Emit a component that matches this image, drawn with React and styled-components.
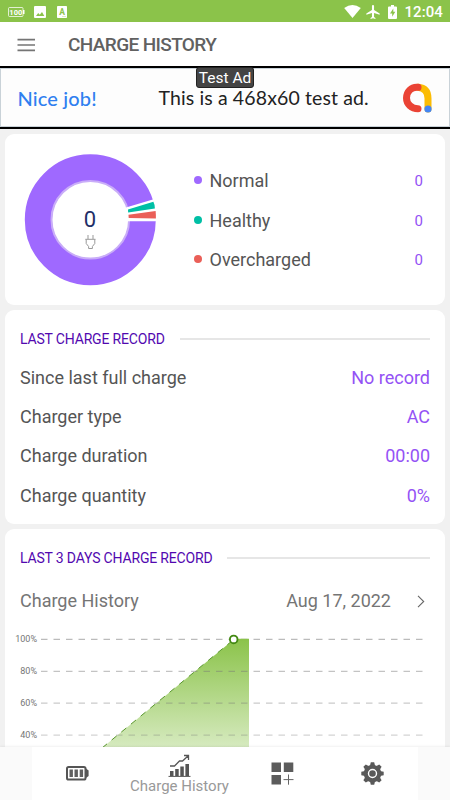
import React from 'react';
import styled, { createGlobalStyle } from 'styled-components';

const GlobalStyle = createGlobalStyle`
  * {
    box-sizing: border-box;
  }
  body {
    margin: 0;
    background: #f1f1f1;
    font-family: Roboto, "Liberation Sans", sans-serif;
  }
  svg {
    display: block;
    flex-shrink: 0;
  }
`;

const Screen = styled.div`
  width: 450px;
  height: 800px;
  display: flex;
  flex-direction: column;
  overflow: hidden;
  background: #f1f1f1;
`;

const StatusBar = styled.div`
  height: 22px;
  flex-shrink: 0;
  display: flex;
  align-items: center;
  justify-content: space-between;
  padding: 1px 7px 0 8px;
  background: #8bc34a;
  color: #fff;
`;

const StatusGroup = styled.div`
  display: flex;
  align-items: center;
  gap: ${props => props.gap}px;
`;

const Clock = styled.span`
  font-size: 15px;
  font-weight: 500;
  line-height: 20px;
  letter-spacing: 0.1px;
`;

const AppBar = styled.div`
  height: 44px;
  flex-shrink: 0;
  display: flex;
  align-items: center;
  gap: 33px;
  padding: 1px 0 0 17px;
  background: #fff;
`;

const Title = styled.h1`
  margin: 0;
  font-size: 19px;
  font-weight: 500;
  line-height: 22px;
  letter-spacing: -0.62px;
  color: #616161;
`;

const AdBanner = styled.div`
  position: relative;
  height: 63px;
  flex-shrink: 0;
  display: flex;
  align-items: center;
  padding: 0 18px 0 16px;
  background: #fdfdfd;
  border-top: 2px solid #000;
  border-bottom: 2px solid #000;
  box-shadow: inset 0 0 0 1px #c9d2d8;
  font-family: Lato, "Open Sans", sans-serif;
`;

const AdPraise = styled.span`
  width: 142.5px;
  padding-left: 1.5px;
  font-size: 20px;
  font-weight: 500;
  line-height: 24px;
  letter-spacing: 0.15px;
  color: #2f7ff0;
`;

const AdText = styled.span`
  flex: 1;
  font-size: 19.5px;
  line-height: 24px;
  letter-spacing: 0.12px;
  white-space: nowrap;
  color: #222;
`;

const AdTag = styled.span`
  position: absolute;
  top: -1px;
  left: 196px;
  width: 58px;
  height: 21px;
  border: 1px solid #222;
  border-radius: 3px;
  background: #444;
  color: #fff;
  font: 15.5px/20px Roboto, sans-serif;
  text-align: center;
`;

const Content = styled.main`
  flex: 1;
  min-height: 0;
  display: flex;
  flex-direction: column;
  gap: 5px;
  padding: 5px 5px 0;
  overflow: hidden;
`;

const Card = styled.section`
  height: ${props => props.height}px;
  flex-shrink: 0;
  border-radius: 9px;
  background: #fff;
`;

const SummaryCard = styled(Card)`
  display: flex;
  align-items: flex-start;
  padding: 19px 22px 0 19px;
`;

const Legend = styled.div`
  flex: 1;
  margin: 8.6px 0 0 37px;
`;

const LegendRow = styled.div`
  height: 39.4px;
  display: flex;
  align-items: center;
`;

const Dot = styled.i`
  width: 8px;
  height: 8px;
  margin: 0 7.5px 2px 0;
  border-radius: 50%;
  background: ${props => props.color};
`;

const Label = styled.span`
  flex: 1;
  font-size: 18px;
  line-height: 22px;
  color: ${props => (props.muted ? '#757575' : '#555')};
`;

const Value = styled.span`
  font-size: ${props => (props.small ? 15 : 18)}px;
  line-height: 22px;
  color: ${props => (props.muted ? '#757575' : '#9452f5')};
`;

const RecordCard = styled(Card)`
  padding: 20px 15px 0;
`;

const Heading = styled.div`
  display: flex;
  align-items: center;
  gap: 15px;
  height: 18px;
  margin-bottom: 10px;
  font-size: 14px;
  line-height: 18px;
  letter-spacing: -0.17px;
  white-space: nowrap;
  color: #5208b0;

  &::after {
    content: '';
    flex: 1;
    height: 2px;
    margin-bottom: 1px;
    background: #e6e6e6;
  }
`;

const Row = styled.div`
  height: 39.4px;
  display: flex;
  align-items: center;
`;

const DateRow = styled(Row)`
  height: 48px;
  padding-right: 5px;

  svg {
    margin-left: 26px;
  }
`;

const ChartBox = styled.div`
  margin: 0 -15px;
`;

const NavBar = styled.nav`
  height: 53px;
  flex-shrink: 0;
  padding: 0 32px;
  background: #fafafa;
  box-shadow: 0 -1px 2px rgba(0, 0, 0, 0.06);
  z-index: 1;
`;

const NavItems = styled.div`
  height: 100%;
  display: grid;
  grid-template-columns: 90px 115px 90px 91px;
  justify-items: center;
  background: #fff;
`;

const NavItem = styled.div`
  display: flex;
  flex-direction: column;
  align-items: center;
  padding-top: ${props => (props.active ? 7 : 15)}px;
`;

const NavLabel = styled.span`
  font-size: 15px;
  line-height: 17px;
  white-space: nowrap;
  color: #999;
`;

const legend = [
  { name: 'Normal', color: '#9f69ff', value: 0 },
  { name: 'Healthy', color: '#00bfa5', value: 0 },
  { name: 'Overcharged', color: '#ea5f58', value: 0 },
];

const lastRecord = [
  ['Since last full charge', 'No record'],
  ['Charger type', 'AC'],
  ['Charge duration', '00:00'],
  ['Charge quantity', '0%'],
];

const levels = [100, 80, 60, 40];

const Donut = () => (
  <svg width="133" height="133" viewBox="0 0 133 133">
    <circle cx="66.3" cy="66.7" r="52" fill="none" stroke="#9f69ff" strokeWidth="27" />
    <circle cx="66.3" cy="66.7" r="38.8" fill="none" stroke="#c9adf8" strokeWidth="2" />
    <path d="M102 54.6 L133 45.2 V68.2 H102 Z" fill="#fff" />
    <path d="M104 56.4 L129.4 48.8 Q131 52 130.9 55.6 L104.2 59.6 Z" fill="#00bfa5" />
    <path d="M104.5 61.8 L131.6 58 Q132 62 131.9 65.5 L104.7 65 Z" fill="#ea5f58" />
    <text x="66" y="73.7" fontSize="22" textAnchor="middle" fill="#1f2f68">0</text>
    <g fill="none" stroke="#999" strokeWidth="1">
      <path d="M64 82v4M69 82v4M61.3 86.3h10.2M62.2 86.5v4l2.4 3v2h3.8v-2l2.4-3v-4" />
    </g>
  </svg>
);

const ChargeChart = () => (
  <svg width="440" height="125" viewBox="5 625 440 125">
    <defs>
      <linearGradient id="area" gradientUnits="userSpaceOnUse" x1="0" y1="639" x2="0" y2="747">
        <stop offset="0" stopColor="#8bc34a" />
        <stop offset="1" stopColor="#d6eabf" />
      </linearGradient>
    </defs>
    <path d="M102 748 L233.7 639.5 H249 V750 H102 Z" fill="url(#area)" />
    {levels.map((level, i) => (
      <g key={level}>
        <path
          d={`M41 ${639.4 + i * 31.9}H423`}
          stroke="#777"
          strokeOpacity={0.5 - i * 0.06}
          strokeWidth="1.3"
          strokeDasharray="6.5 6"
        />
        <text x="37" y={642.3 + i * 31.9} fontSize="9" textAnchor="end" fill="#757575">
          {level}%
        </text>
      </g>
    ))}
    <path d="M233.7 639.5H249" stroke="#8bc34a" strokeWidth="1.5" />
    <path d="M102 748 L233.7 639.5" stroke="#58962c" strokeWidth="1" strokeDasharray="6.5 6" />
    <circle cx="233.7" cy="639.4" r="3.8" fill="#fff" stroke="#438913" strokeWidth="1.9" />
  </svg>
);

const AdLogo = () => (
  <svg width="30" height="30" viewBox="0 0 30 30" fill="none" strokeWidth="7" strokeLinecap="round">
    <path d="M16 4.3 Q26 5 26 15.5 V26" stroke="#fbbc04" />
    <path d="M16 4.3 C9 3.6 4.5 9 4.5 15 C4.5 21 9.5 25.8 16 25.8" stroke="#ea4335" />
    <circle cx="26" cy="26" r="3.6" fill="#4285f4" />
  </svg>
);

const StatusIcons = () => (
  <StatusGroup gap={9}>
    <svg width="17" height="12" viewBox="0 0 17 12">
      <rect x="0.5" y="1.5" width="14.5" height="9" rx="1" fill="none" stroke="#fff" strokeOpacity="0.75" />
      <rect x="15" y="4" width="1.5" height="4" fill="#fff" />
      <text x="7.8" y="8.8" fontSize="7.5" fontWeight="700" textAnchor="middle" fill="#fff">100</text>
    </svg>
    <svg width="12" height="12" viewBox="0 0 12 12">
      <rect width="12" height="12" rx="1" fill="#fff" />
      <path d="M2 10 L4.2 7 5.8 8.8 8 6 10.3 10 Z" fill="#8bc34a" />
    </svg>
    <svg width="13" height="12" viewBox="-2 0 13 12">
      <rect width="10" height="12" rx="0.8" fill="#fff" />
      <text x="5" y="8.8" fontSize="8.5" fontWeight="700" textAnchor="middle" fill="#8bc34a">A</text>
      <path d="M5.5 10.5h1M7.5 10.5h1" stroke="#8bc34a" strokeWidth="0.6" />
    </svg>
  </StatusGroup>
);

const SystemIcons = () => (
  <StatusGroup gap={5}>
    <svg width="17" height="13" viewBox="0 0 17 13" fill="#fff">
      <path d="M0.2 3 Q8.4 -3 16.8 3 L8.5 13 Z" />
    </svg>
    <svg width="14" height="14" viewBox="2 2 19 20" fill="#fff">
      <path d="M21 16v-2l-8-5V3.5a1.5 1.5 0 0 0-3 0V9l-8 5v2l8-2.5V19l-2 1.5V22l3.5-1 3.5 1v-1.5L13 19v-5.5z" />
    </svg>
    <svg width="14" height="14" viewBox="-3 0 14 14">
      <path d="M3 0h3v1.4h2q1 0 1 1V13q0 1-1 1H1q-1 0-1-1V2.4q0-1 1-1h2z" fill="#fff" />
      <path d="M5.3 3.5 2 8.5h2.2v3.2L7.3 6.8H5.3z" fill="#8bc34a" />
    </svg>
    <Clock>12:04</Clock>
  </StatusGroup>
);

const BatteryIcon = () => (
  <svg width="23" height="23" viewBox="0 0 23 23">
    <rect x="1" y="5" width="18.5" height="12.5" rx="1.6" fill="#fff" stroke="#555" strokeWidth="2" />
    <path d="M5.2 7.5v7.5M10.2 7.5v7.5M15.4 7.5v7.5" stroke="#606060" strokeWidth="3.4" />
    <path d="M20 6.5 22.6 8.5V14L20 16z" fill="#555" />
  </svg>
);

const HistoryIcon = () => (
  <svg width="23" height="24" viewBox="0 0 23 24">
    <path d="M2 17h3.5v5H2zM7.2 15h3.5v7H7.2zM12.3 12.5h3.5V22h-3.5zM17.4 10H21v12h-3.6z" fill="#555" />
    <path d="M0.5 22.4h22" stroke="#555" strokeWidth="1" />
    <path d="M2 12h4.5l5-5h3l5.5-5M16 1.5h4.5V6" fill="none" stroke="#555" strokeWidth="1.3" />
  </svg>
);

const WidgetsIcon = () => (
  <svg width="23" height="23" viewBox="0 0 23 23">
    <path d="M0.5 0.5H10V10H0.5zM12.8 0.5h9.5V10h-9.5zM0.5 13H10v9.5H0.5z" fill="#5c5c5c" />
    <path d="M12.5 17.6h10M17.5 12.5v10.2" stroke="#666" strokeWidth="1" />
  </svg>
);

const teeth = [0, 45, 90, 135, 180, 225, 270, 315];

const GearIcon = () => (
  <svg width="23" height="23" viewBox="0 0 23 23">
    <circle cx="11.5" cy="11.5" r="8.8" fill="#595959" />
    {teeth.map(angle => (
      <path key={angle} d="M8.9 4 9.8 0.3h3.4L14.1 4z" fill="#595959" transform={`rotate(${angle} 11.5 11.5)`} />
    ))}
    <circle cx="11.5" cy="11.5" r="4" fill="#595959" stroke="#fff" strokeWidth="1.4" />
  </svg>
);

const App = () => {
  return (
    <>
      <GlobalStyle />
      <Screen>
        <StatusBar>
          <StatusIcons />
          <SystemIcons />
        </StatusBar>
        <AppBar>
          <svg width="18" height="14" viewBox="0 0 18 14">
            <path d="M0.5 1.7H18M0.5 7H18M0.5 12.3H18" stroke="#757575" strokeWidth="1.7" />
          </svg>
          <Title>CHARGE HISTORY</Title>
        </AppBar>
        <AdBanner>
          <AdPraise>Nice job!</AdPraise>
          <AdText>This is a 468x60 test ad.</AdText>
          <AdLogo />
          <AdTag>Test Ad</AdTag>
        </AdBanner>

        <Content>
          <SummaryCard height={171}>
            <Donut />
            <Legend>
              {legend.map(item => (
                <LegendRow key={item.name}>
                  <Dot color={item.color} />
                  <Label>{item.name}</Label>
                  <Value small>{item.value}</Value>
                </LegendRow>
              ))}
            </Legend>
          </SummaryCard>

          <RecordCard height={214}>
            <Heading>LAST CHARGE RECORD</Heading>
            {lastRecord.map(([name, value]) => (
              <Row key={name}>
                <Label>{name}</Label>
                <Value>{value}</Value>
              </Row>
            ))}
          </RecordCard>

          <RecordCard height={260}>
            <Heading>LAST 3 DAYS CHARGE RECORD</Heading>
            <DateRow>
              <Label muted>Charge History</Label>
              <Value muted>Aug 17, 2022</Value>
              <svg width="8" height="13" viewBox="0 0 8 13">
                <path d="M1 0.8 6.7 6.5 1 12.2" fill="none" stroke="#666" strokeWidth="1.1" />
              </svg>
            </DateRow>
            <ChartBox>
              <ChargeChart />
            </ChartBox>
          </RecordCard>
        </Content>

        <NavBar>
          <NavItems>
            <NavItem>
              <BatteryIcon />
            </NavItem>
            <NavItem active>
              <HistoryIcon />
              <NavLabel>Charge History</NavLabel>
            </NavItem>
            <NavItem>
              <WidgetsIcon />
            </NavItem>
            <NavItem>
              <GearIcon />
            </NavItem>
          </NavItems>
        </NavBar>
      </Screen>
    </>
  );
};

export default App;
